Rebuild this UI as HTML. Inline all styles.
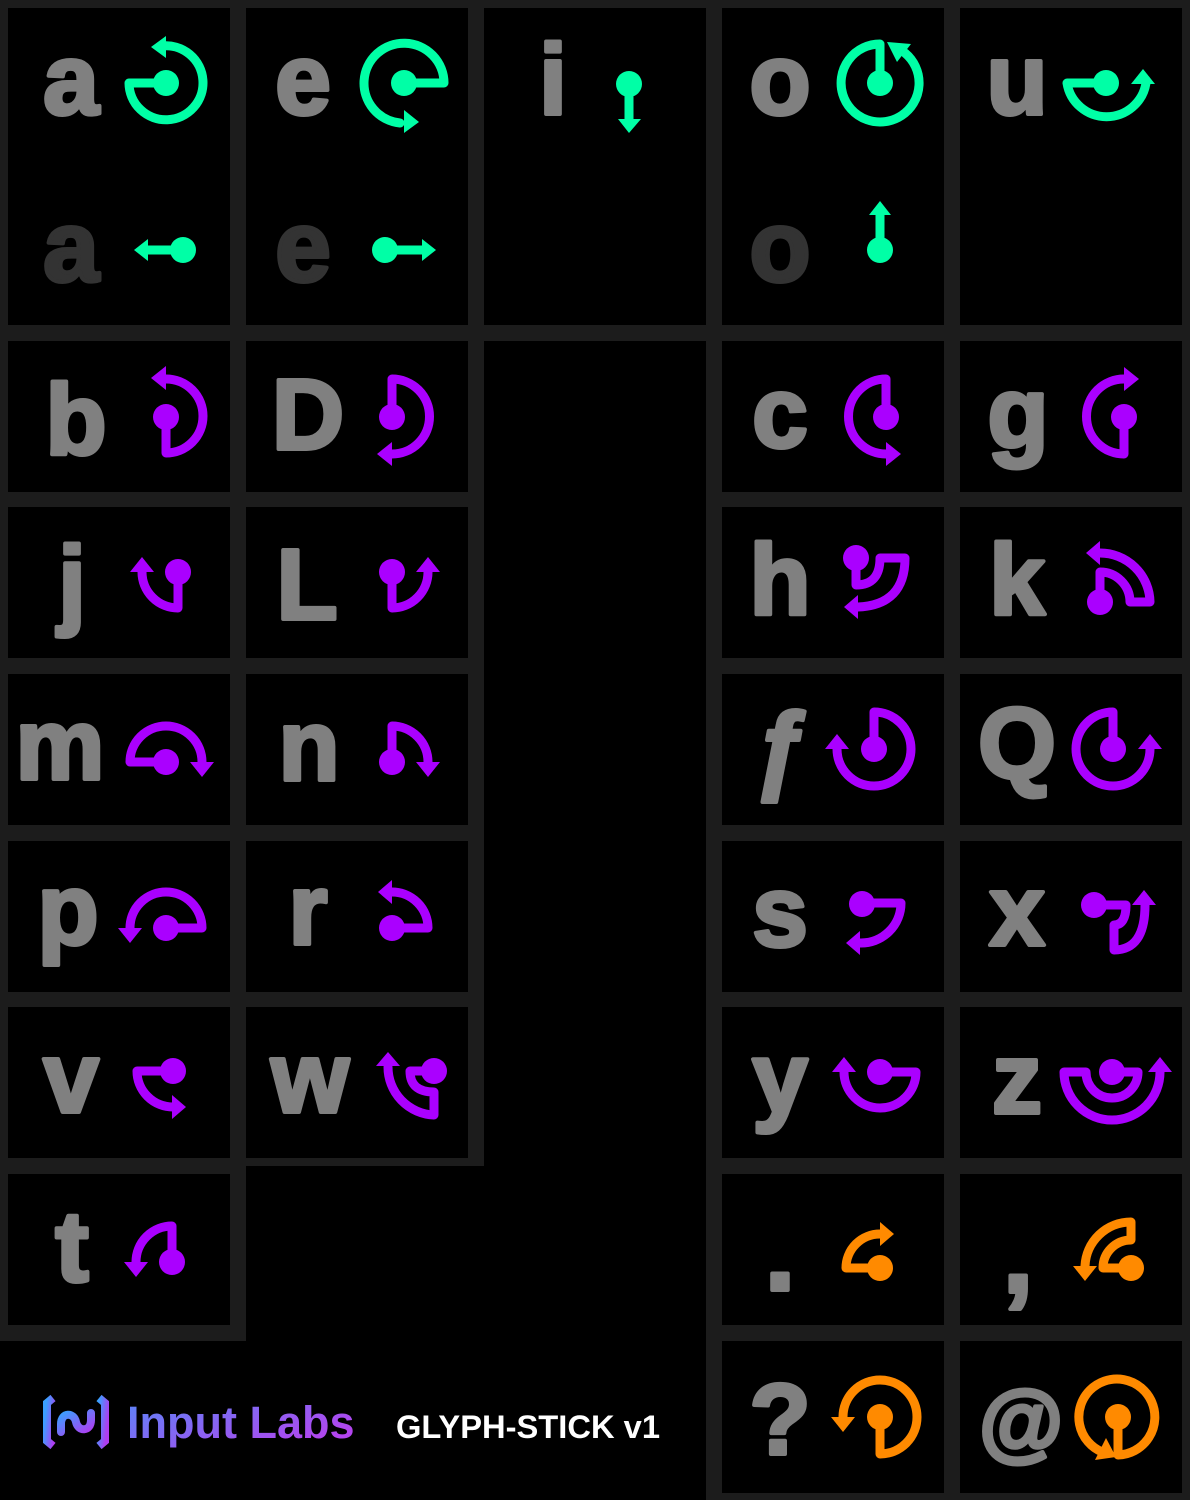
<!DOCTYPE html>
<html><head><meta charset="utf-8"><style>
html,body{margin:0;padding:0;background:#000;}
svg{display:block}
</style></head><body>
<svg width="1190" height="1500" viewBox="0 0 1190 1500" xmlns="http://www.w3.org/2000/svg">
<defs>
<linearGradient id="lg" x1="0" y1="0" x2="1" y2="1">
<stop offset="0" stop-color="#3aa0ff"/><stop offset="1" stop-color="#b03cf0"/>
</linearGradient>
<linearGradient id="lg2" x1="0" y1="0" x2="1" y2="0.6">
<stop offset="0" stop-color="#5a86f8"/><stop offset="1" stop-color="#b245ee"/>
</linearGradient>
</defs>
<rect width="1190" height="1500" fill="#000"/>
<g fill="#1c1c1c">
<rect x="0" y="0" width="1190" height="341"/>
<rect x="0" y="0" width="484" height="1166"/>
<rect x="0" y="0" width="246" height="1341"/>
<rect x="706" y="0" width="484" height="1500"/>
</g>
<g fill="#000">
<rect x="8" y="8" width="222" height="317"/>
<rect x="246" y="8" width="222" height="317"/>
<rect x="484" y="8" width="222" height="317"/>
<rect x="722" y="8" width="222" height="317"/>
<rect x="960" y="8" width="222" height="317"/>
<rect x="484" y="341" width="222" height="1159"/>
<rect x="246" y="1174" width="238" height="326"/>
<rect x="0" y="1341" width="484" height="159"/>
<rect x="8" y="341" width="222" height="151"/><rect x="246" y="341" width="222" height="151"/>
<rect x="722" y="341" width="222" height="151"/><rect x="960" y="341" width="222" height="151"/>
<rect x="8" y="507" width="222" height="151"/><rect x="246" y="507" width="222" height="151"/>
<rect x="722" y="507" width="222" height="151"/><rect x="960" y="507" width="222" height="151"/>
<rect x="8" y="674" width="222" height="151"/><rect x="246" y="674" width="222" height="151"/>
<rect x="722" y="674" width="222" height="151"/><rect x="960" y="674" width="222" height="151"/>
<rect x="8" y="841" width="222" height="151"/><rect x="246" y="841" width="222" height="151"/>
<rect x="722" y="841" width="222" height="151"/><rect x="960" y="841" width="222" height="151"/>
<rect x="8" y="1007" width="222" height="151"/><rect x="246" y="1007" width="222" height="151"/>
<rect x="722" y="1007" width="222" height="151"/><rect x="960" y="1007" width="222" height="151"/>
<rect x="8" y="1174" width="222" height="151"/>
<rect x="722" y="1174" width="222" height="151"/><rect x="960" y="1174" width="222" height="151"/>
<rect x="722" y="1341" width="222" height="152"/><rect x="960" y="1341" width="222" height="152"/>
</g>

<g font-family="Liberation Sans, sans-serif" font-weight="bold" font-size="100" fill="#808080" stroke="#808080" stroke-width="4" stroke-linejoin="round" text-anchor="middle">
<text x="71" y="114">a</text><text x="303" y="114">e</text><text x="553" y="114">i</text><text x="780" y="114">o</text><text x="1017" y="114">u</text>
<text x="71" y="281" fill="#333" stroke="#333">a</text><text x="303" y="281" fill="#333" stroke="#333">e</text><text x="780" y="281" fill="#333" stroke="#333">o</text>
<text x="76" y="454">b</text><text x="308" y="449">D</text><text x="780" y="447">c</text><text x="1018" y="447">g</text>
<text x="72" y="616">j</text><text x="307" y="619">L</text><text x="780" y="614">h</text><text x="1017" y="614">k</text>
<text x="60" y="779">m</text><text x="309" y="780">n</text><text x="782" y="781">ƒ</text><text x="1017" y="778">Q</text>
<text x="68" y="944">p</text><text x="308" y="944">r</text><text x="780" y="946">s</text><text x="1017" y="945">x</text>
<text x="71" y="1112">v</text><text x="310" y="1112">w</text><text x="780" y="1112">y</text><text x="1017" y="1113">z</text>
<text x="72" y="1281">t</text><text x="780" y="1290" font-size="110">.</text><text x="1018" y="1292" font-size="110">,</text>
<text x="780" y="1454">?</text><text x="1021" y="1451" font-size="86">@</text>
</g>

<!-- green icons -->
<g stroke="#00ffa6" fill="none" stroke-width="9" stroke-linecap="round" stroke-linejoin="round">
<path d="M166,83 H129 A37,37 0 1 0 162,46"/>
<path d="M404,83 H444 A40,40 0 1 0 400,123"/>
<path d="M183,250 H146"/>
<path d="M385,250 H424"/>
<path d="M629,84 V120"/>
<path d="M880,83 V44 A39,39 0 1 0 905,53"/>
<path d="M880,250 V214"/>
<path d="M1106,83 H1067 A40,40 0 0 0 1146,83 V80"/>
</g>
<g fill="#00ffa6">
<circle cx="166" cy="83" r="13"/><polygon points="151,47 166,36 166,58"/>
<circle cx="404" cy="83" r="13"/><polygon points="419,122 404,110 404,133"/>
<circle cx="183" cy="250" r="13"/><polygon points="134,250 148,239 148,261"/>
<circle cx="385" cy="250" r="13"/><polygon points="436,250 422,239 422,261"/>
<ellipse cx="629" cy="84" rx="13" ry="13"/><polygon points="629,133 618,119 641,119"/>
<circle cx="880" cy="83" r="13"/><polygon points="887,42 911,44 897,62"/>
<circle cx="880" cy="250" r="13"/><polygon points="880,201 869,215 891,215"/>
<circle cx="1106" cy="83" r="13"/><polygon points="1143,69 1131,84 1155,84"/>
</g>

<!-- purple icons -->
<g stroke="#aa00ff" fill="none" stroke-width="9" stroke-linecap="round" stroke-linejoin="round">
<path d="M166,417 V453 A37,37 0 0 0 166,379 H162"/>
<path d="M392,417 V379 A37,37 0 0 1 392,454 H388"/>
<path d="M178,572 V608 A36,36 0 0 1 142,572"/>
<path d="M392,572 V608 A36,36 0 0 0 428,572"/>
<path d="M886,417 V379 A37,37 0 0 0 886,454 H890"/>
<path d="M1124,417 V454 A37,37 0 0 1 1124,379 H1128"/>
<path d="M856,558 V585 Q880,585 880,558 H905 Q905,605 858,607"/>
<path d="M1100,602 V572 A30,30 0 0 1 1130,602 H1150 A50,50 0 0 0 1100,553"/>
<path d="M166,762 H130 A36,36 0 0 1 202,762"/>
<path d="M392,762 V726 A36,36 0 0 1 428,762"/>
<path d="M166,928 H202 A36,36 0 0 0 130,928"/>
<path d="M392,928 H428 A36,36 0 0 0 392,892"/>
<path d="M874,749 V712 A37,37 0 1 1 837,749"/>
<path d="M1113,749 V712 A37,37 0 1 0 1150,749"/>
<path d="M862,903 H901 A40,40 0 0 1 860,943"/>
<path d="M1094,905 H1126 Q1126,925 1114,925 V950 Q1145,950 1145,905"/>
<path d="M173,1071 H137 A36,36 0 0 0 173,1107"/>
<path d="M434,1071 H410 Q410,1092 434,1092 V1115 A48,48 0 0 1 388,1067"/>
<path d="M172,1262 V1226 A36,36 0 0 0 136,1262"/>
<path d="M880,1072 H916 A36,36 0 0 1 844,1072"/>
<path d="M1112,1072 H1138 A26,26 0 0 1 1086,1072 H1064 A48,48 0 0 0 1160,1072"/>
</g>
<g fill="#aa00ff">
<circle cx="166" cy="417" r="13"/><polygon points="151,378 166,366 166,390"/>
<circle cx="392" cy="417" r="13"/><polygon points="377,454 392,442 392,466"/>
<circle cx="178" cy="572" r="13"/><polygon points="142,557 130,572 154,572"/>
<circle cx="392" cy="572" r="13"/><polygon points="428,557 416,572 440,572"/>
<circle cx="886" cy="417" r="13"/><polygon points="901,454 886,442 886,466"/>
<circle cx="1124" cy="417" r="13"/><polygon points="1139,379 1124,367 1124,391"/>
<circle cx="856" cy="558" r="13"/><polygon points="844,607 858,595 858,619"/>
<circle cx="1100" cy="602" r="13"/><polygon points="1086,553 1100,541 1100,565"/>
<circle cx="166" cy="762" r="13"/><polygon points="202,777 190,762 214,762"/>
<circle cx="392" cy="762" r="13"/><polygon points="428,777 416,762 440,762"/>
<circle cx="166" cy="928" r="13"/><polygon points="130,943 118,928 142,928"/>
<circle cx="392" cy="928" r="13"/><polygon points="378,892 392,880 392,904"/>
<circle cx="874" cy="749" r="13"/><polygon points="837,734 825,749 849,749"/>
<circle cx="1113" cy="749" r="13"/><polygon points="1150,734 1138,749 1162,749"/>
<circle cx="862" cy="904" r="13"/><polygon points="846,943 860,931 860,955"/>
<circle cx="1094" cy="905" r="13"/><polygon points="1144,890 1132,905 1156,905"/>
<circle cx="173" cy="1071" r="13"/><polygon points="186,1107 172,1095 172,1119"/>
<circle cx="434" cy="1071" r="13"/><polygon points="388,1052 376,1066 400,1066"/>
<circle cx="172" cy="1262" r="13"/><polygon points="136,1277 124,1262 148,1262"/>
<circle cx="880" cy="1072" r="13"/><polygon points="844,1057 832,1072 856,1072"/>
<circle cx="1112" cy="1072" r="13"/><polygon points="1160,1057 1148,1072 1172,1072"/>
</g>

<!-- orange icons -->
<g stroke="#ff8a00" fill="none" stroke-width="9" stroke-linecap="round" stroke-linejoin="round">
<path d="M880,1268 H846 A34,34 0 0 1 880,1234"/>
<path d="M1131,1268 H1103 A28,28 0 0 1 1131,1240 V1222 A46,46 0 0 0 1085,1266"/>
<path d="M880,1417 V1454 A37,37 0 1 0 843,1417"/>
<path d="M1118,1417 V1455 A38,38 0 1 0 1102,1452"/>
</g>
<g fill="#ff8a00">
<circle cx="880" cy="1268" r="13"/><polygon points="894,1234 880,1222 880,1246"/>
<circle cx="1131" cy="1268" r="13"/><polygon points="1085,1281 1073,1266 1097,1266"/>
<circle cx="880" cy="1417" r="13"/><polygon points="843,1432 831,1417 855,1417"/>
<circle cx="1118" cy="1417" r="13"/><polygon points="1116,1457 1095,1460 1106,1438"/>
</g>

<!-- logo -->
<g fill="none" stroke="url(#lg)" stroke-width="8" stroke-linejoin="miter">
<path d="M53,1398 L47,1403 V1441 L53,1446"/>
<path d="M99,1398 L105,1403 V1441 L99,1446"/>
<path d="M61,1432 V1424 C61,1412 74,1412 76,1422 C78,1432 91,1432 91,1420 V1413" stroke-linecap="round"/>
</g>
<text x="127" y="1438" font-family="Liberation Sans, sans-serif" font-weight="bold" font-size="45" fill="url(#lg2)">Input Labs</text>
<text x="396" y="1438" font-family="Liberation Sans, sans-serif" font-weight="bold" font-size="32" fill="#fff" textLength="264" lengthAdjust="spacingAndGlyphs">GLYPH-STICK v1</text>
</svg>
</body></html>
